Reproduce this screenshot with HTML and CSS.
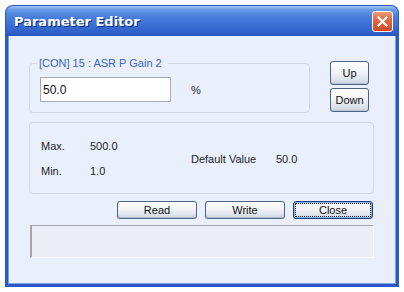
FILE: index.html
```html
<!DOCTYPE html>
<html lang="en">
<head>
    <meta charset="UTF-8">
    <meta name="viewport" content="width=device-width, initial-scale=1.0">
    <title>Parameter Editor</title>
    <link rel="stylesheet" href="styles.css">
</head>
<body>
    <div class="window">
        <div class="titlebar">
            <span class="title">Parameter Editor</span>
            <button class="close-x" title="Close">
                <svg width="11" height="11" viewBox="0 0 11 11">
                    <path d="M1.5 1.5 L9.5 9.5 M9.5 1.5 L1.5 9.5" stroke="#fff" stroke-width="2.2" stroke-linecap="square" fill="none"/>
                </svg>
            </button>
        </div>

        <div class="client">
            <div class="top-row">
                <fieldset class="param-group">
                    <legend>[CON] 15 : ASR P Gain 2</legend>
                    <div class="value-row">
                        <input class="value-input" type="text" value="50.0">
                        <span class="unit">%</span>
                    </div>
                </fieldset>
                <div class="step-buttons">
                    <button class="btn btn-step">Up</button>
                    <button class="btn btn-step">Down</button>
                </div>
            </div>

            <div class="limits">
                <span class="max-label">Max.</span>
                <span class="max-value">500.0</span>
                <span class="min-label">Min.</span>
                <span class="min-value">1.0</span>
                <span class="default-label">Default Value</span>
                <span class="default-value">50.0</span>
            </div>

            <div class="actions">
                <button class="btn btn-action">Read</button>
                <button class="btn btn-action">Write</button>
                <button class="btn btn-action btn-default">Close</button>
            </div>

            <div class="status"></div>
        </div>
    </div>
</body>
</html>
```

FILE: styles.css
```css
body {
    margin: 0;
    background: #fff;
    font-family: 'Liberation Sans', Arial, sans-serif;
    font-size: 11px;
    color: #1e1e1e;
}
.window {
    margin: 5px;
    width: 394px;
    height: 282px;
    display: flex;
    flex-direction: column;
    box-sizing: border-box;
}
.titlebar {
    height: 31px;
    display: flex;
    align-items: center;
    justify-content: space-between;
    padding: 0 5px 0 8px;
    border-radius: 8px 8px 0 0;
    border: 1px solid #2a57c0;
    border-bottom: none;
    box-sizing: border-box;
    background: linear-gradient(#a4c8f4 0, #6a9ce8 12%, #4a7fdc 35%, #3a6ed4 65%, #2f60ca 88%, #2553bc 100%);
}
.title {
    font-family: 'DejaVu Sans', sans-serif;
    font-weight: bold;
    font-size: 13px;
    color: #fff;
    text-shadow: 1px 1px 0 #0c2a78;
    padding-top: 1px;
}
.close-x {
    width: 21px;
    height: 21px;
    padding: 0;
    display: flex;
    align-items: center;
    justify-content: center;
    border: 1px solid #fff;
    border-radius: 3px;
    background: linear-gradient(#f09a78 0, #e26a42 40%, #cf4a22 100%);
    margin-top: 1px;
}
.client {
    flex: 1;
    background: #eaf0fb;
    border: 3px solid #2b5ac8;
    border-top: none;
    box-shadow: inset 1px 0 0 #7da3e6, inset -1px 0 0 #7da3e6, inset 0 -1px 0 #7da3e6;
    padding: 21px 0 0 21px;
}
.top-row {
    display: flex;
    align-items: flex-start;
}
.param-group {
    margin: 0;
    width: 281px;
    min-width: 0;
    box-sizing: border-box;
    padding: 7px 0 10px 10px;
    border: 1px solid #d2d9e2;
    border-radius: 4px;
}
.param-group legend {
    padding: 0 6px 0 2px;
    margin-left: -3px;
    line-height: 13px;
    color: #3a66b6;
}
.value-row {
    display: flex;
    align-items: center;
}
.value-input {
    width: 131px;
    height: 25px;
    box-sizing: border-box;
    border: 1px solid #a3abb5;
    padding: 0 2px;
    font-family: 'Liberation Sans', Arial, sans-serif;
    font-size: 12px;
    color: #111;
    background: #fff;
}
.unit {
    margin-left: 20px;
}
.step-buttons {
    display: flex;
    flex-direction: column;
    gap: 3px;
    margin: 4px 0 0 20px;
}
.btn {
    font-family: 'Liberation Sans', Arial, sans-serif;
    font-size: 11px;
    color: #111;
    padding: 0;
    border: 1px solid #4d6484;
    border-radius: 3px;
    background: linear-gradient(#ffffff 0, #f1f3f7 45%, #dde3eb 80%, #c9d2df 100%);
    box-shadow: inset 0 -1px 0 #b8c2d2;
}
.btn-step {
    width: 39px;
    height: 24px;
}
.limits {
    margin-top: 9px;
    width: 345px;
    box-sizing: border-box;
    border: 1px solid #d2d9e2;
    border-radius: 4px;
    padding: 17px 0 15px 11px;
    display: grid;
    grid-template-columns: 49px 101px 85px auto;
    grid-template-rows: 13px 13px;
    row-gap: 12px;
    line-height: 13px;
}
.max-label { grid-column: 1; grid-row: 1; }
.max-value { grid-column: 2; grid-row: 1; }
.min-label { grid-column: 1; grid-row: 2; }
.min-value { grid-column: 2; grid-row: 2; }
.default-label { grid-column: 3; grid-row: 1 / span 2; align-self: center; }
.default-value { grid-column: 4; grid-row: 1 / span 2; align-self: center; }
.actions {
    width: 344px;
    margin-top: 7px;
    display: flex;
    justify-content: flex-end;
    gap: 8px;
}
.btn-action {
    width: 80px;
    height: 18px;
    line-height: 16px;
}
.btn-default {
    border-color: #1f3f86;
    box-shadow: inset 0 0 0 1px #8fb0ea;
    outline: 1px dotted #222;
    outline-offset: -3px;
}
.status {
    margin: 6px 0 0 1px;
    width: 344px;
    height: 33px;
    box-sizing: border-box;
    border-top: 1px solid #a6a6a6;
    border-left: 2px solid #a6a6a6;
    border-right: 1px solid #f8f8f8;
    border-bottom: 1px solid #f8f8f8;
    background: #ebeff5;
}
```
